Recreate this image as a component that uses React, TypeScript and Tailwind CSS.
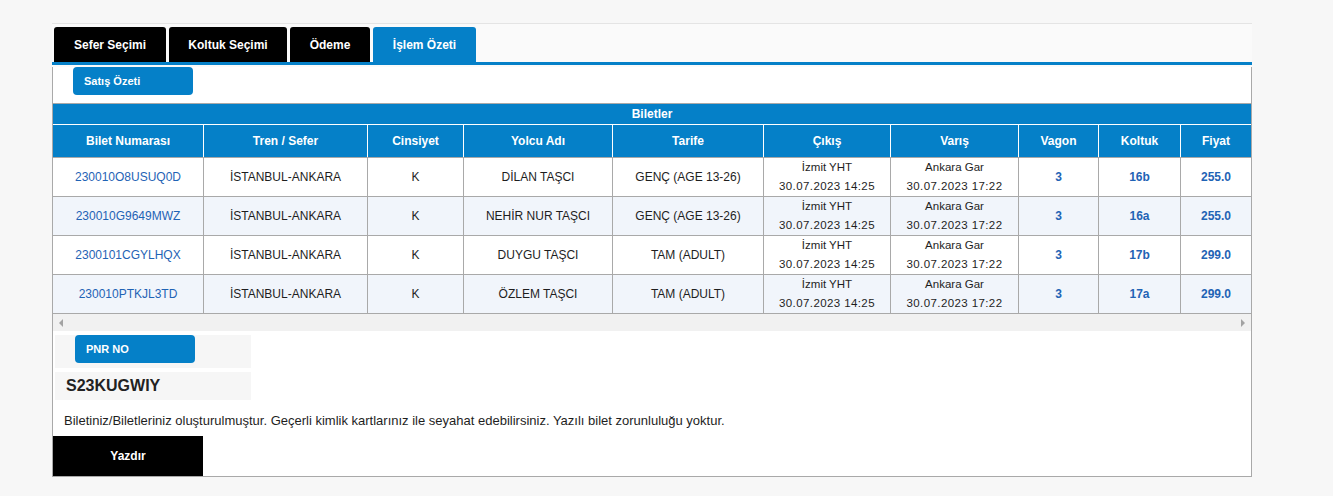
import React from "react";

const BLUE = "bg-[#0580c8]";

type Row = { no: string; name: string; tarife: string; koltuk: string; fiyat: string };

const rows: Row[] = [
  { no: "230010O8USUQ0D", name: "DİLAN TAŞCI", tarife: "GENÇ (AGE 13-26)", koltuk: "16b", fiyat: "255.0" },
  { no: "230010G9649MWZ", name: "NEHİR NUR TAŞCI", tarife: "GENÇ (AGE 13-26)", koltuk: "16a", fiyat: "255.0" },
  { no: "2300101CGYLHQX", name: "DUYGU TAŞCI", tarife: "TAM (ADULT)", koltuk: "17b", fiyat: "299.0" },
  { no: "230010PTKJL3TD", name: "ÖZLEM TAŞCI", tarife: "TAM (ADULT)", koltuk: "17a", fiyat: "299.0" },
];

const headers = ["Bilet Numarası", "Tren / Sefer", "Cinsiyet", "Yolcu Adı", "Tarife", "Çıkış", "Varış", "Vagon", "Koltuk", "Fiyat"];

const gridCols = "grid grid-cols-[151px_164px_96px_149px_151px_127px_128px_80px_82px_70px]";

function Tab({ label, active, w }: { label: string; active?: boolean; w: string }) {
  return (
    <div
      className={`${w} h-[35px] rounded-t-[3px] flex items-center justify-center text-[12px] font-bold text-white ${
        active ? "bg-[#0580c8]" : "bg-black"
      }`}
    >
      {label}
    </div>
  );
}

export default function App() {
  return (
    <div className="min-h-[496px] bg-[#f7f7f7] pt-[23px] font-['Liberation_Sans',Arial,sans-serif] text-[#1e1e1e]">
      <div className="ml-[52px] w-[1200px] border-t border-[#e4e4e4] bg-[#fafafa]">
        <div className="flex gap-[3px] pl-[2px] pt-[3px]">
          <Tab label="Sefer Seçimi" w="w-[112px]" />
          <Tab label="Koltuk Seçimi" w="w-[118px]" />
          <Tab label="Ödeme" w="w-[80px]" />
          <Tab label="İşlem Özeti" w="w-[103px]" active />
        </div>
        <div className={`h-[3px] ${BLUE}`} />
        <div className="border border-t-0 border-[#a9a9a9] bg-white">
          <div className={`ml-[20px] mt-[2px] h-[28px] w-[120px] rounded-[4px] ${BLUE} pl-[11px] text-[11px] font-bold leading-[28px] text-white`}>
            Satış Özeti
          </div>

          <div className="mt-[8px] border-t border-[#a9a9a9]">
            <div className={`h-[20px] ${BLUE} text-center text-[12px] font-bold leading-[20px] text-white`}>Biletler</div>
            <div className={gridCols}>
              {headers.map((h, i) => (
                <div
                  key={h}
                  className={`h-[33px] border-t border-white ${i < headers.length - 1 ? "border-r" : ""} ${BLUE} flex items-center justify-center text-[12px] font-bold text-white`}
                >
                  {h}
                </div>
              ))}
            </div>
            <div className="border-b border-[#a9a9a9]">
              {rows.map((r, idx) => {
                const bg = idx % 2 === 1 ? "bg-[#f1f5fb]" : "bg-white";
                const cell = `h-[39px] border-t border-[#a9a9a9] flex items-center justify-center text-center ${bg}`;
                return (
                  <div key={r.no} className={gridCols}>
                    <div className={`${cell} border-r text-[12px] text-[#1f63b5]`}>{r.no}</div>
                    <div className={`${cell} border-r text-[12px]`}>İSTANBUL-ANKARA</div>
                    <div className={`${cell} border-r text-[12px]`}>K</div>
                    <div className={`${cell} border-r text-[12px]`}>{r.name}</div>
                    <div className={`${cell} border-r text-[12px]`}>{r.tarife}</div>
                    <div className={`${cell} border-r flex-col`}>
                      <span className="text-[11.5px] leading-[19px]">İzmit YHT</span>
                      <span className="text-[11.5px] leading-[19px] tracking-[0.4px]">30.07.2023 14:25</span>
                    </div>
                    <div className={`${cell} border-r flex-col`}>
                      <span className="text-[11.5px] leading-[19px]">Ankara Gar</span>
                      <span className="text-[11.5px] leading-[19px] tracking-[0.4px]">30.07.2023 17:22</span>
                    </div>
                    <div className={`${cell} border-r text-[12px] font-bold text-[#1f63b5]`}>3</div>
                    <div className={`${cell} border-r text-[12px] font-bold text-[#1f63b5]`}>{r.koltuk}</div>
                    <div className={`${cell} text-[12px] font-bold text-[#1f63b5]`}>{r.fiyat}</div>
                  </div>
                );
              })}
            </div>
            <div className="flex h-[17px] items-center justify-between bg-[#f1f1f1] px-[6px]">
              <div className="h-0 w-0 border-y-[4px] border-r-[4px] border-y-transparent border-r-[#a3a3a3]" />
              <div className="h-0 w-0 border-y-[4px] border-l-[4px] border-y-transparent border-l-[#a3a3a3]" />
            </div>
          </div>

          <div className="ml-[2px] mt-[4px] h-[33px] w-[196px] bg-[#f6f6f6]">
            <div className={`ml-[20px] h-[28px] w-[120px] rounded-[4px] ${BLUE} pl-[11px] text-[11px] font-bold leading-[28px] text-white`}>
              PNR NO
            </div>
          </div>
          <div className="ml-[2px] mt-[4px] h-[28px] w-[196px] bg-[#f6f6f6] pl-[11px] text-[16px] font-bold leading-[28px] text-[#222]">
            S23KUGWIY
          </div>

          <div className="pb-[8px] pl-[11px] pt-[14px] text-[13px] leading-[14px] text-[#1e1e1e]">
            Biletiniz/Biletleriniz oluşturulmuştur. Geçerli kimlik kartlarınız ile seyahat edebilirsiniz. Yazılı bilet zorunluluğu yoktur.
          </div>
          <div className="flex h-[40px] w-[150px] items-center justify-center bg-black text-[12px] font-bold text-white">Yazdır</div>
        </div>
      </div>
    </div>
  );
}
